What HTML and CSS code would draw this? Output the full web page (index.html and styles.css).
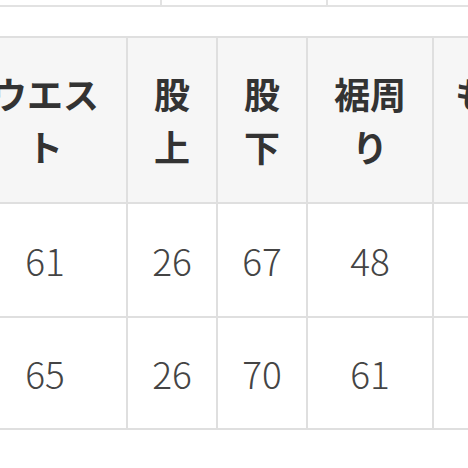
FILE: index.html
```html
<!DOCTYPE html>
<html lang="ja">
<head>
<meta charset="utf-8">
<link rel="stylesheet" href="styles.css">
</head>
<body>
<div class="page">
  <table class="prev">
    <tr>
      <td class="p1"></td>
      <td class="p2"></td>
      <td class="p3"></td>
    </tr>
  </table>
  <table class="size">
    <tr class="head">
      <th class="c1">ウエスト</th>
      <th class="c2">股上</th>
      <th class="c3">股下</th>
      <th class="c4">裾周り</th>
      <th class="c5">もも周り</th>
    </tr>
    <tr>
      <td>61</td>
      <td>26</td>
      <td>67</td>
      <td>48</td>
      <td></td>
    </tr>
    <tr>
      <td>65</td>
      <td>26</td>
      <td>70</td>
      <td>61</td>
      <td></td>
    </tr>
  </table>
</div>
</body>
</html>
```
FILE: styles.css
```css
html, body {
  margin: 0;
  padding: 0;
  background: #ffffff;
}
.page {
  width: 468px;
  height: 468px;
  overflow: hidden;
  font-family: "Noto Sans CJK JP", "Noto Sans", sans-serif;
}
.prev {
  border-collapse: separate;
  border-spacing: 2px;
  background: #e2e2e2;
  table-layout: fixed;
  width: 560px;
  margin-left: -40px;
  margin-top: -2px;
}
.prev td {
  background: #ffffff;
  height: 5px;
  padding: 0;
}
.p1 { width: 198px; }
.p2 { width: 164px; }
.p3 { width: 190px; }
.size {
  border-collapse: separate;
  border-spacing: 2px;
  background: #dfdfdf;
  table-layout: fixed;
  width: 624px;
  margin-left: -38px;
  margin-top: 29px;
}
.size th, .size td {
  box-sizing: border-box;
  padding: 0 20px;
  text-align: center;
  vertical-align: middle;
  color: #3a3a3a;
}
.size th {
  background: #f6f6f6;
  height: 164px;
  font-size: 36px;
  font-weight: 700;
  line-height: 53px;
  color: #333333;
}
.size td {
  background: #ffffff;
  height: 112px;
  font-size: 37px;
  font-weight: 300;
  line-height: 40px;
  color: #444444;
}
.size tr:last-child td {
  height: 110px;
}
.c1 { width: 162px; }
.c2 { width: 88px; }
.c3 { width: 88px; }
.c4 { width: 124px; }
.c5 { width: 150px; }
```
